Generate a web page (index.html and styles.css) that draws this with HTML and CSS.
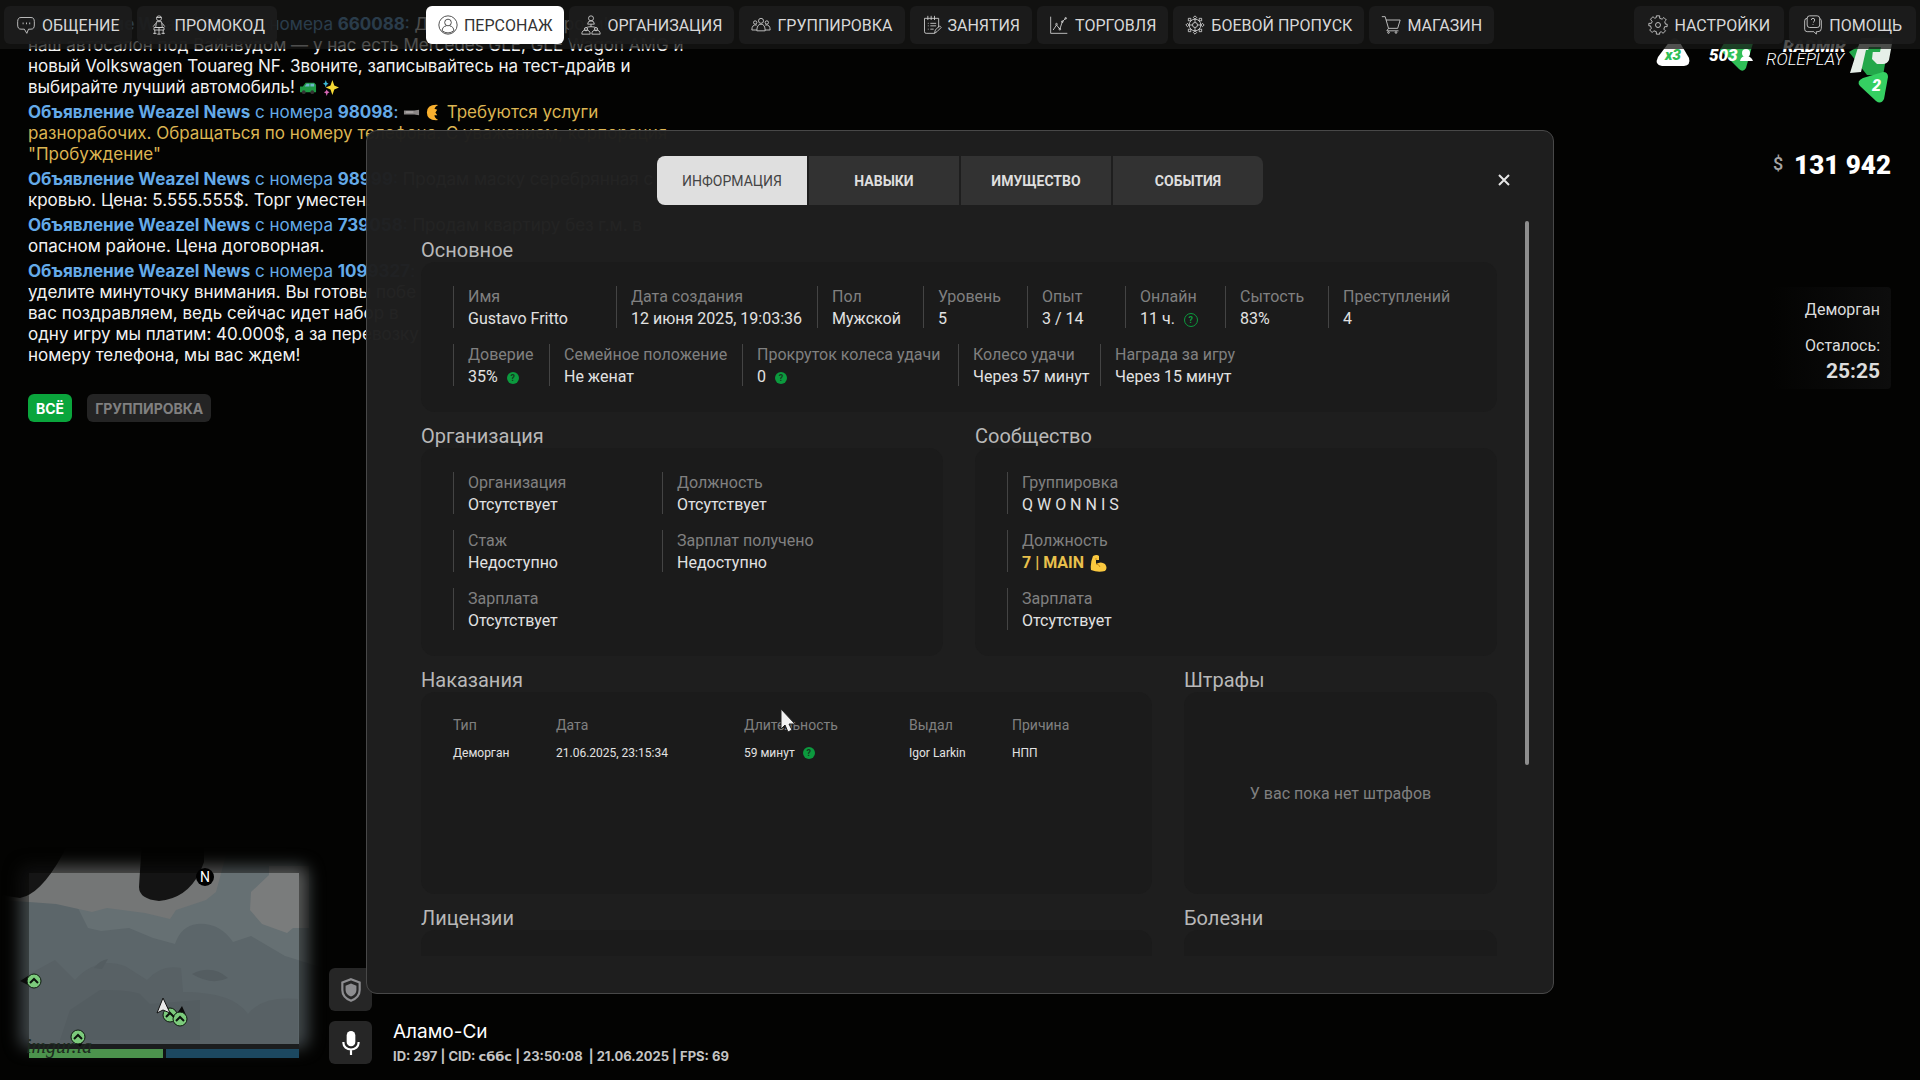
FILE: index.html
```html
<!DOCTYPE html>
<html lang="ru">
<head>
    <meta charset="UTF-8">
    <meta name="viewport" content="width=device-width, initial-scale=1.0">
    <title>Персонаж</title>
    <link rel="stylesheet" href="styles.css">
</head>
<body>
    <!-- Chat -->
    <div class="chat">
        <p><span class="news"><b>Объявление Weazel News</b> с номера <b>660088</b>:</span> Добрый вечер, игроки! Открылся<br>наш автосалон под Вайнвудом — у нас есть Mercedes GLE, GLE Wagon AMG и<br>новый Volkswagen Touareg NF. Звоните, записывайтесь на тест-драйв и<br>выбирайте лучший автомобиль!
            <svg class="emoji" viewBox="0 0 18 18"><path d="M0 8l3 0 3-4h9l2 2v8H0z" fill="#1f9a45"/><path d="M5 8l2-3h3v3zM11 8V5h4v3z" fill="#6fb7c9"/><circle cx="4" cy="14" r="2" fill="#333"/><circle cx="13" cy="14" r="2" fill="#333"/></svg>
            <svg class="emoji" viewBox="0 0 18 18"><path d="M11 1l2 6 5 2-5 2-2 6-2-6-5-2 5-2z" fill="#f5d935"/><path d="M4 1l1 3 2 1-2 1-1 3-1-3-2-1 2-1z" fill="#3cb9d6"/><path d="M5 11l1 2 2 1-2 1-1 3-1-3-2-1 2-1z" fill="#d667b5"/></svg>
        </p>
        <p class="gold"><span class="news"><b>Объявление Weazel News</b> с номера <b>98098</b>:</span>
            <svg class="emoji" viewBox="0 0 18 18"><path d="M1 7h11l5-1v6l-5-1H1z" fill="#8a8685"/><path d="M3 8h8v1H3z" fill="#c9c5c2"/></svg>
            <svg class="emoji" viewBox="0 0 18 18"><path d="M14 1Q2 0 2 9t12 8q-4-2-4-5l3 0-2-3 2-3-3-1q1-3 4-4z" fill="#f9b02e"/></svg>
            Требуются услуги<br>разнорабочих. Обращаться по номеру телефона. С уважением, корпорация<br>"Пробуждение"</p>
        <p><span class="news"><b>Объявление Weazel News</b> с номера <b>98999</b>:</span> Продам маску серебрянная с<br>кровью. Цена: 5.555.555$. Торг уместен.</p>
        <p><span class="news"><b>Объявление Weazel News</b> с номера <b>739058</b>:</span> Продам квартиру без г.м. в<br>опасном районе. Цена договорная.</p>
        <p><span class="news"><b>Объявление Weazel News</b> с номера <b>1099327</b>:</span><br>уделите минуточку внимания. Вы готовы побе<br>вас поздравляем, ведь сейчас идет набор в<br>одну игру мы платим: 40.000$, а за перевозку<br>номеру телефона, мы вас ждем!</p>
        <div class="chat-tabs">
            <button class="chat-tab active">ВСЁ</button>
            <button class="chat-tab">ГРУППИРОВКА</button>
        </div>
    </div>

    <!-- Server info -->
    <div class="server">
        <svg class="server-logo" viewBox="0 0 240 76" width="240" height="76">
            <path d="M19 11q5-6 9 0l10 17q2 7-5 8H11q-8-1-4-9z" fill="#fff"/>
            <text x="14" y="30" class="logo-x3">x3</text>
            <path d="M75 10l23-2q5 0 4 5l-7 25q-3 5-7 1L69 20z" fill="#2fbf57"/>
            <text x="58" y="31" class="logo-online">503</text>
            <circle cx="95" cy="23" r="4" fill="#fff"/><path d="M89 31q1-5 6-5t7 5z" fill="#fff"/>
            <path d="M198 22l30-18q10-2 10 6l-6 36-16-1z" fill="#23a84a"/>
            <path d="M210 8h32l-4 22q-2 4-6 4h-6l-5-5 1-9h-7l-5 22-11 1z" fill="#e6efe8"/>
            <path d="M218 17h12l-1 5h-8l-2 9h-5z" fill="#23a84a"/>
            <path d="M212 48l20-6q5 0 5 5l-4 22q-3 6-8 2l-16-15q-4-5 3-8z" fill="#35d062"/>
            <text x="221" y="61" class="logo-num">2</text>
            <text x="132" y="22" class="logo-radmir">RADMIR</text>
            <text x="115" y="35" class="logo-role">ROLEPLAY</text>
        </svg>
        <div class="money"><span>$</span>131 942</div>
        <div class="jail">
            <div>Деморган</div>
            <div class="jail-left">Осталось:</div>
            <b>25:25</b>
        </div>
    </div>

    <!-- Minimap and status -->
    <div class="hud">
        <svg class="minimap" viewBox="0 0 329 240" width="329" height="240">
            <defs>
                <filter id="soft"><feGaussianBlur stdDeviation="8"/></filter>
                <mask id="edge"><rect x="20" y="26" width="288" height="182" rx="8" fill="#fff" filter="url(#soft)"/></mask>
                <clipPath id="area"><rect x="29" y="33" width="270" height="171"/></clipPath>
                <g id="land">
                    <rect width="330" height="240" fill="#5c666a"/>
                    <path d="M0 0H330V130L285 116l-34-20-18 6q-14-20-36-18-16 2-22 20l-22-6-24-10-28 3-13-3-10-20-24-6-40-8z" fill="#667073"/>
                    <path d="M0 0H230l-14 52-10 8-30 10-6 9-25-6-38-5-15 4-36-8-56-4z" fill="#747676"/>
                    <path d="M269 26l40 0v62l-16 0-6 5-25-9-12-14 1-18 18-17z" fill="#7a7c7c"/>
                    <path d="M0 150l55-30 20 20q22-24 50-14l22 14q14-16 34-12l2 24q50 0 65 22 14-18 50-15V240H0z" fill="#586165"/>
                    <path d="M70 170l30-20q30 0 40 4l10 10 50-4v40H60z" fill="#545d61"/>
                    <path d="M94 128q6-8 14-9l-6 10zM192 134q20-10 36 4-16 8-36-4z" fill="#545d61"/>
                    <path d="M0 0h70Q44 54 20 58L0 55z" fill="#151515"/>
                    <path d="M142 0h62v22q-12 36-45 39-20-2-20-14z" fill="#141414"/>
                </g>
            </defs>
            <g mask="url(#edge)"><use href="#land" opacity=".7"/></g>
            <g clip-path="url(#area)"><use href="#land"/></g>
            <rect x="29" y="204" width="270" height="5" fill="#1b1d1e"/>
            <rect x="29" y="209" width="134" height="9" fill="#4c934d"/>
            <rect x="163" y="209" width="3" height="9" fill="#101214"/>
            <rect x="166" y="209" width="133" height="9" fill="#1c4860"/>
            <text x="26" y="213" class="map-mark">imgur.la</text>
            <circle cx="205" cy="37" r="9" fill="#000"/>
            <text x="205" y="42" class="map-north">N</text>
            <path d="M20 141l8-5v9zM182 166l4 9-8-3zM80 207l-6-7h10z" fill="#0b0b0b"/>
            <g fill="#7ccb7c" stroke="#0f1a10" stroke-width="1">
                <circle cx="34" cy="141" r="7"/><circle cx="78" cy="197" r="7"/><circle cx="170" cy="175" r="7"/><circle cx="180" cy="179" r="7"/>
            </g>
            <path d="M30 143l4-4 4 4M74 199l4-4 4 4M166 177l4-4 4 4M176 181l4-4 4 4" fill="none" stroke="#0b140c" stroke-width="2"/>
            <path d="M163 158l7 15-7-3-6 3z" fill="#e8e8e8" stroke="#111"/>
        </svg>
        <div class="hud-tiles">
            <div class="tile"><svg viewBox="0 0 24 24" width="26" height="26"><path d="M12 2l8 3v7c0 5-3 8-8 10-5-2-8-5-8-10V5z" fill="none" stroke="#8d8d90" stroke-width="2"/><path d="M12 6l5 2v4c0 3-2 5-5 6-3-1-5-3-5-6V8z" fill="#8d8d90"/></svg></div>
            <div class="tile"><svg viewBox="0 0 24 24" width="26" height="26"><rect x="8" y="1" width="8" height="14" rx="4" fill="#fff"/><path d="M5 11v1a7 6 0 0 0 14 0v-1M12 18v5" fill="none" stroke="#fff" stroke-width="2"/></svg></div>
        </div>
        <div class="place">
            <div class="place-name">Аламо-Си</div>
            <div class="place-info">ID: 297 | CID: <span>сббс</span> | 23:50:08 &nbsp;| 21.06.2025 | FPS: 69</div>
        </div>
    </div>

    <!-- Top menu -->
    <nav class="topbar">
        <div class="group">
            <button class="nav-btn">
                <svg viewBox="0 0 24 24"><path d="M6 3h12q4 0 4 5v4q0 5-4 5h-3l-2 5-3-5H6q-4 0-4-5V8q0-5 4-5z"/><path d="M8 10h1M12 10h1M16 10h1" stroke-width="2"/></svg>ОБЩЕНИЕ</button>
            <button class="nav-btn">
                <svg viewBox="0 0 24 24"><circle cx="12" cy="4" r="3"/><path d="M9 3h6M9 8h6l1 7H8zM8 10l-3 4M16 10l3 4M6 15h12v3H6zM12 15v8M7 18v5M17 18v5M5 22h4M15 22h4M10 23h4"/></svg>ПРОМОКОД</button>
        </div>
        <div class="group">
            <button class="nav-btn active">
                <svg viewBox="0 0 24 24"><circle cx="12" cy="12" r="11"/><circle cx="12" cy="9" r="4"/><path d="M5 19q0-5 5-6M19 19q0-5-5-6M5 19q7 5 14 0"/></svg>ПЕРСОНАЖ</button>
            <button class="nav-btn">
                <svg viewBox="0 0 24 24"><circle cx="12" cy="4" r="3"/><path d="M8 11q0-4 4-4t4 4zM12 11v3M6 16q0-2 6-2t6 2"/><circle cx="6" cy="17" r="2"/><circle cx="18" cy="17" r="2"/><path d="M1 23q0-5 5-5t5 5zM13 23q0-5 5-5t5 5z"/></svg>ОРГАНИЗАЦИЯ</button>
            <button class="nav-btn">
                <svg viewBox="0 0 24 24"><circle cx="12" cy="7" r="3"/><circle cx="5" cy="9" r="2"/><circle cx="19" cy="9" r="2"/><path d="M7 19q0-8 5-8t5 8zM7 12q-6-1-6 6h6M17 12q6-1 6 6h-6"/></svg>ГРУППИРОВКА</button>
            <button class="nav-btn">
                <svg viewBox="0 0 24 24"><path d="M20 15V4H3v16q0 2 2 2h10M7 1v5M11 1v5M15 1v5M7 10h1M10 10h7M7 13h1M10 13h7M7 17h1M10 17h4M15 22l1-4 5-5 2 2-5 5z"/></svg>ЗАНЯТИЯ</button>
            <button class="nav-btn">
                <svg viewBox="0 0 24 24"><path d="M2 2v20h20M5 18l4-6 4 5 3-9 4-4"/><circle cx="9" cy="11" r="1"/><circle cx="13" cy="17" r="1"/><circle cx="16" cy="8" r="1"/><circle cx="20" cy="4" r="1"/></svg>ТОРГОВЛЯ</button>
            <button class="nav-btn">
                <svg viewBox="0 0 24 24"><circle cx="12" cy="12" r="7"/><circle cx="12" cy="12" r="3"/><path d="M12 5l-2-2 2-2 2 2zM12 19l-2 2 2 2 2-2zM5 12l-2-2-2 2 2 2zM19 12l2-2 2 2-2 2zM7 7L4 7V4h3zM17 7h3V4h-3zM7 17H4v3h3zM17 17h3v3h-3zM12 9V5M12 15v4M9 12H5M15 12h4"/></svg>БОЕВОЙ ПРОПУСК</button>
            <button class="nav-btn">
                <svg viewBox="0 0 24 24"><path d="M1 2h4l4 14h11l3-10H6M9 16l-2 3h14"/><circle cx="9" cy="21" r="1"/><circle cx="18" cy="21" r="1"/></svg>МАГАЗИН</button>
        </div>
        <div class="group right">
            <button class="nav-btn">
                <svg viewBox="0 0 24 24"><circle cx="12" cy="12" r="3"/><path d="M10 1h4v3l3 1 2-2 3 3-2 2 1 3h2v3h-3l-1 3 2 2-3 3-2-2-2 1v2h-4v-3l-3-1-2 2-3-3 2-2-1-3H1v-3h3l1-2-2-3 3-3 2 2 2-1z"/></svg>НАСТРОЙКИ</button>
            <button class="nav-btn">
                <svg viewBox="0 0 24 24"><rect x="5" y="1" width="15" height="14" rx="3"/><path d="M5 4Q2 4 2 7v10q0 3 3 3h8l3 3v-3h2q4 0 4-4V7q0-2-2-3M10 6q0-2 2-2t2 2-2 3M12 11v1"/></svg>ПОМОЩЬ</button>
        </div>
    </nav>

    <!-- Character window -->
    <main class="window">
        <div class="window-head">
            <div class="tabs">
                <button class="tab active">ИНФОРМАЦИЯ</button>
                <button class="tab">НАВЫКИ</button>
                <button class="tab">ИМУЩЕСТВО</button>
                <button class="tab">СОБЫТИЯ</button>
            </div>
            <button class="close" aria-label="Закрыть"><svg viewBox="0 0 12 12" width="12" height="12"><path d="M1 1l10 10M11 1L1 11" stroke="#e6e6e6" stroke-width="2"/></svg></button>
        </div>
        <div class="window-body">
            <div class="content">
                <section>
                    <h2>Основное</h2>
                    <div class="card main-card">
                        <dl class="row row-first">
                            <div class="item"><dt>Имя</dt><dd>Gustavo Fritto</dd></div>
                            <div class="item"><dt>Дата создания</dt><dd>12 июня 2025, 19:03:36</dd></div>
                            <div class="item"><dt>Пол</dt><dd>Мужской</dd></div>
                            <div class="item"><dt>Уровень</dt><dd>5</dd></div>
                            <div class="item"><dt>Опыт</dt><dd>3 / 14</dd></div>
                            <div class="item"><dt>Онлайн</dt><dd>11 ч. <span class="help outline">?</span></dd></div>
                            <div class="item"><dt>Сытость</dt><dd>83%</dd></div>
                            <div class="item"><dt>Преступлений</dt><dd>4</dd></div>
                        </dl>
                        <dl class="row row-second">
                            <div class="item"><dt>Доверие</dt><dd>35% <span class="help">?</span></dd></div>
                            <div class="item"><dt>Семейное положение</dt><dd>Не женат</dd></div>
                            <div class="item"><dt>Прокруток колеса удачи</dt><dd>0 <span class="help">?</span></dd></div>
                            <div class="item"><dt>Колесо удачи</dt><dd>Через 57 минут</dd></div>
                            <div class="item"><dt>Награда за игру</dt><dd>Через 15 минут</dd></div>
                        </dl>
                    </div>
                </section>
                <div class="halves">
                    <section>
                        <h2>Организация</h2>
                        <dl class="card pairs">
                            <div class="item"><dt>Организация</dt><dd>Отсутствует</dd></div>
                            <div class="item"><dt>Должность</dt><dd>Отсутствует</dd></div>
                            <div class="item"><dt>Стаж</dt><dd>Недоступно</dd></div>
                            <div class="item"><dt>Зарплат получено</dt><dd>Недоступно</dd></div>
                            <div class="item"><dt>Зарплата</dt><dd>Отсутствует</dd></div>
                        </dl>
                    </section>
                    <section>
                        <h2>Сообщество</h2>
                        <dl class="card pairs single">
                            <div class="item"><dt>Группировка</dt><dd>Q W O N N I S</dd></div>
                            <div class="item"><dt>Должность</dt><dd class="rank">7 | MAIN
                                <svg viewBox="0 0 18 18" width="18" height="18"><path d="M4 2q4-2 6 0l0 4-3 0 0 4q5-3 9 0 3 4 0 7-7 2-14-1-1-7 2-14z" fill="#fbc93f"/><path d="M7 10q3 0 4 3M7 4v2" stroke="#c98a1e" fill="none"/></svg></dd></div>
                            <div class="item"><dt>Зарплата</dt><dd>Отсутствует</dd></div>
                        </dl>
                    </section>
                </div>
                <div class="split">
                    <section>
                        <h2>Наказания</h2>
                        <div class="card tall">
                            <table>
                                <thead>
                                    <tr><th>Тип</th><th>Дата</th><th>Длительность</th><th>Выдал</th><th>Причина</th></tr>
                                </thead>
                                <tbody>
                                    <tr><td>Деморган</td><td>21.06.2025, 23:15:34</td><td>59 минут <span class="help">?</span></td><td>Igor Larkin</td><td>НПП</td></tr>
                                </tbody>
                            </table>
                        </div>
                    </section>
                    <section>
                        <h2>Штрафы</h2>
                        <div class="card tall empty">У вас пока нет штрафов</div>
                    </section>
                </div>
                <div class="split">
                    <section>
                        <h2>Лицензии</h2>
                        <div class="card tall"></div>
                    </section>
                    <section>
                        <h2>Болезни</h2>
                        <div class="card tall"></div>
                    </section>
                </div>
            </div>
            <div class="scroll"><div class="scroll-thumb"></div></div>
        </div>
    </main>

    <svg class="cursor" viewBox="0 0 16 26" width="16" height="26"><path d="M1 1v20l4-4 3 7 4-2-3-6h6z" fill="#f2f2f2" stroke="#222"/></svg>
</body>
</html>
```
FILE: styles.css
```css
* { box-sizing: border-box; }
body { margin: 0; height: 100vh; overflow: hidden; background: #030302; color: #fff; font-family: Roboto, sans-serif; font-size: 16px; }
button { font: inherit; color: inherit; border: 0; padding: 0; cursor: pointer; }
h2, p, dl, dd { margin: 0; }

/* chat */
.chat { position: absolute; left: 28px; top: 14px; font-family: Inter, sans-serif; font-size: 17px; line-height: 21px; white-space: nowrap; color: #f2f2f2; }
.chat p { margin-bottom: 4px; }
.chat .news { color: #64aae8; }
.chat .gold { color: #dcb552; }
.emoji { width: 17px; height: 17px; vertical-align: -3px; }
.chat-tabs { display: flex; gap: 15px; margin-top: 28px; }
.chat-tab { height: 28px; padding: 0 8px; border-radius: 6px; background: #242424; color: #808080; font-size: 14px; font-weight: 700; }
.chat-tab.active { background: #0aa53c; color: #fff; }

/* top menu */
.topbar { position: relative; display: grid; grid-template-columns: 1fr auto 1fr; height: 49px; padding: 6px 4px 5px; background: rgba(23, 23, 21, 0.75); }
.group { display: flex; gap: 5px; }
.right { justify-content: flex-end; }
.nav-btn { display: flex; align-items: center; gap: 6px; height: 38px; padding: 0 12px; border-radius: 6px; background: rgba(28, 28, 28, 0.93); color: #d8d8d8; white-space: nowrap; }
.nav-btn svg { width: 20px; height: 20px; fill: none; stroke: currentColor; stroke-width: 1; }
.nav-btn.active { background: #fff; color: #333; }
.right .nav-btn { padding: 0 14px; }

/* server info */
.server { position: absolute; right: 29px; top: 30px; display: flex; flex-direction: column; align-items: flex-end; }
.server-logo { overflow: visible; }
.server-logo text { font-style: italic; fill: #fff; }
.logo-x3 { font-size: 15px; font-weight: 900; }
.server-logo .logo-x3 { fill: #2fbf57; }
.logo-online { font-size: 17px; font-weight: 900; }
.logo-num { font-size: 16px; font-weight: 900; }
.logo-radmir { font-size: 17px; font-weight: 900; }
.logo-role { font-size: 17px; font-weight: 300; }
.money { margin-top: 42px; font-size: 26px; line-height: 32px; font-weight: 900; }
.money span { margin-right: 11px; color: #a5a5a5; font-size: 18px; font-weight: 500; vertical-align: 4px; }
.jail { width: 120px; margin-top: 106px; padding: 11px 11px 4px; border-radius: 4px; background: linear-gradient(to right, transparent, #0d0d0d); text-align: right; color: #dcdcdc; line-height: 24px; }
.jail-left { margin-top: 12px; }
.jail b { font-size: 21px; line-height: 27px; }

/* minimap */
.hud { position: absolute; left: 0; bottom: 0; display: flex; align-items: flex-end; }
.map-mark { font: italic 20px "Liberation Serif", serif; fill: #1d2a1f; }
.map-north { font-size: 14px; text-anchor: middle; fill: #fff; }
.minimap { display: block; }
.hud-tiles { display: flex; flex-direction: column; gap: 10px; margin-bottom: 16px; }
.tile { display: flex; align-items: center; justify-content: center; width: 43px; height: 43px; border-radius: 6px; background: #262626; }
.place { margin: 0 0 12px 21px; font-family: Inter, sans-serif; white-space: nowrap; }
.place-name { font-size: 19px; line-height: 26px; }
.place-info { font-size: 13px; line-height: 22px; font-weight: 700; color: #c4c4c4; }
.place-info span { font-family: "DejaVu Sans", sans-serif; }

/* window */
.window { position: relative; display: flex; flex-direction: column; width: 110vh; height: 80vh; margin: 81px auto 0; padding: 25px 24px 37px 54px; border: 1px solid #484848; border-radius: 11px; background: rgba(31, 31, 31, 0.98); }
.window-head { display: grid; grid-template-columns: 1fr auto 1fr; align-items: center; margin-left: -30px; }
.tabs { grid-column: 2; display: flex; gap: 2px; border-radius: 8px; overflow: hidden; }
.tab { width: 150px; height: 49px; background: #323232; color: #dedede; font-size: 14px; font-weight: 700; }
.tab.active { background: #dfdfdf; color: #444; font-weight: 400; }
.close { justify-self: end; width: 32px; height: 32px; margin-right: 9px; background: none; }
.window-body { display: flex; flex: 1; justify-content: space-between; min-height: 0; margin-top: 16px; }
.content { flex: 1; padding-top: 17px; overflow: hidden; }
.scroll { width: 4px; margin-left: 28px; }
.scroll-thumb { height: 74%; border-radius: 2px; background: #8e8e8e; }

h2 { color: #b8b8b8; font-size: 20px; line-height: 24px; font-weight: 400; }
.card { padding: 24px 32px; border-radius: 14px; background: #1b1b1b; }
.main-card { height: 150px; margin-bottom: 12px; }
.row { display: grid; }
.row-first { grid-template-columns: 163px 201px 106px 104px 98px 100px 103px auto; }
.row-second { grid-template-columns: 96px 193px 216px 142px auto; margin-top: 16px; }
.item { height: 42px; padding-left: 14px; border-left: 1px solid #444; line-height: 22px; white-space: nowrap; }
dt { color: #808080; }
dd { color: #e2e2e2; }
.halves { display: grid; grid-template-columns: 1fr 1fr; gap: 32px; margin-bottom: 12px; }
.pairs { display: grid; grid-template-columns: 209px 1fr; align-content: start; row-gap: 16px; height: 208px; }
.single { grid-template-columns: 1fr; }
.rank { display: flex; align-items: center; gap: 5px; color: #e9c04c; font-weight: 700; }
.split { display: grid; grid-template-columns: 1fr 313px; gap: 32px; margin-bottom: 12px; }
.tall { height: 202px; }
.empty { display: flex; align-items: center; justify-content: center; color: #808080; }

table { width: 100%; border-collapse: collapse; table-layout: fixed; text-align: left; white-space: nowrap; }
th { padding: 0; color: #808080; font-size: 14px; line-height: 18px; font-weight: 400; }
th:nth-child(1), th:nth-child(4) { width: 103px; }
th:nth-child(2) { width: 188px; }
th:nth-child(3) { width: 165px; }
td { padding: 10px 0 0; color: #e2e2e2; font-size: 12px; line-height: 18px; }

.help { display: inline-block; width: 12px; height: 12px; margin-left: 5px; border-radius: 50%; background: #0c9a3e; color: #143a20; font-size: 9px; line-height: 12px; font-weight: 700; text-align: center; vertical-align: 1px; }
.outline { width: 14px; height: 14px; border: 1px solid #0c9a3e; background: none; color: #0c9a3e; }

.cursor { position: absolute; left: 780px; top: 708px; }
```
